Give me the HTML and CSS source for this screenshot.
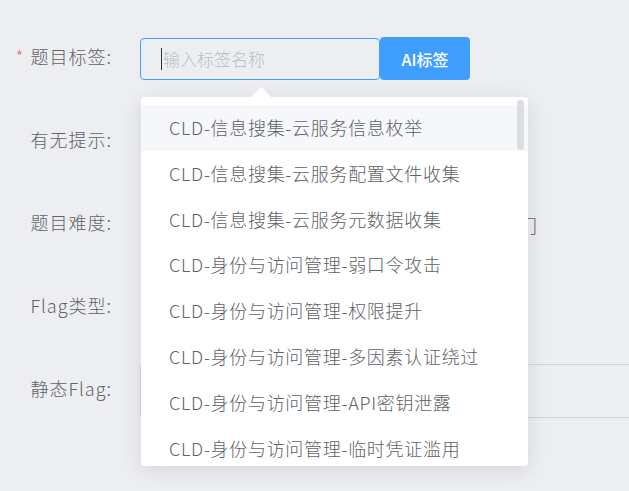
FILE: index.html
```html
<!DOCTYPE html>
<html lang="zh-CN">
<head>
<meta charset="utf-8">
<link rel="stylesheet" href="styles.css">
</head>
<body>
<div class="page">
  <span class="spark spark-a"></span>
  <span class="spark spark-b"></span>
  <form class="form">
    <div class="row">
      <label class="label"><span class="req">*</span>题目标签:</label>
      <div class="control tag-control">
        <div class="input is-focus"><span class="caret"></span><span class="ph">输入标签名称</span></div>
        <button type="button" class="btn">AI标签</button>
        <div class="dropdown">
          <span class="arrow"></span>
          <ul class="list">
            <li class="item is-hover">CLD-信息搜集-云服务信息枚举</li>
            <li class="item">CLD-信息搜集-云服务配置文件收集</li>
            <li class="item">CLD-信息搜集-云服务元数据收集</li>
            <li class="item">CLD-身份与访问管理-弱口令攻击</li>
            <li class="item">CLD-身份与访问管理-权限提升</li>
            <li class="item">CLD-身份与访问管理-多因素认证绕过</li>
            <li class="item">CLD-身份与访问管理-API密钥泄露</li>
            <li class="item">CLD-身份与访问管理-临时凭证滥用</li>
          </ul>
          <span class="thumb"></span>
        </div>
      </div>
    </div>
    <div class="row">
      <label class="label">有无提示:</label>
      <div class="control"></div>
    </div>
    <div class="row">
      <label class="label">题目难度:</label>
      <div class="control level">入门</div>
    </div>
    <div class="row">
      <label class="label">Flag类型:</label>
      <div class="control"></div>
    </div>
    <div class="row">
      <label class="label">静态Flag:</label>
      <div class="control"><div class="box"></div></div>
    </div>
  </form>
</div>
</body>
</html>
```

FILE: styles.css
```css
* { box-sizing: border-box; }
html, body {
  margin: 0;
  padding: 0;
}
body {
  width: 629px;
  height: 491px;
  overflow: hidden;
  background: #edeef2;
  font-family: "Noto Sans CJK SC", "Noto Sans", sans-serif;
  font-weight: 300;
  color: #606266;
}
.page {
  position: relative;
  width: 629px;
  height: 491px;
}
.spark {
  position: absolute;
  width: 8px;
  height: 8px;
  border-radius: 50%;
  background: radial-gradient(circle, rgba(220, 245, 250, 0.9) 0, rgba(220, 245, 250, 0) 70%);
}
.spark-a { left: 264px; top: 3px; }
.spark-b { left: 489px; top: 64px; }
.form {
  margin: 0;
  padding-top: 17px;
}
.row {
  display: flex;
  align-items: center;
  height: 83px;
}
.label {
  flex: 0 0 140px;
  padding-right: 28px;
  padding-bottom: 5px;
  text-align: right;
  font-size: 18px;
  letter-spacing: 1px;
  color: #606266;
  white-space: nowrap;
}
.req {
  color: #f56c6c;
  margin-right: 6px;
}
.control {
  flex: 1;
  display: flex;
  align-items: center;
}
.tag-control {
  position: relative;
}
.input {
  width: 240px;
  height: 42px;
  border: 1px solid #409eff;
  border-radius: 4px;
  display: flex;
  align-items: center;
  padding-left: 20px;
}
.caret {
  width: 1px;
  height: 22px;
  background: #303133;
  margin-right: 1px;
}
.ph {
  font-size: 17px;
  color: #b8bcc4;
}
.btn {
  width: 90px;
  height: 43px;
  border: 0;
  border-radius: 4px;
  background: #409eff;
  color: #fff;
  font-family: inherit;
  font-size: 16px;
  font-weight: 500;
  padding: 0;
}
.dropdown {
  position: absolute;
  left: 1px;
  top: 60px;
  width: 387px;
  height: 369px;
  background: #fff;
  border-radius: 4px;
  box-shadow: 0 4px 22px rgba(0, 0, 0, 0.1);
  padding-top: 8px;
  z-index: 2;
}
.arrow {
  position: absolute;
  left: 110px;
  top: -10px;
  width: 0;
  height: 0;
  border-left: 10px solid transparent;
  border-right: 10px solid transparent;
  border-bottom: 10px solid #fff;
}
.list {
  list-style: none;
  margin: 0;
  padding: 0;
  height: 361px;
  overflow: hidden;
  border-radius: 0 0 4px 4px;
}
.item {
  height: 45.8px;
  line-height: 45.8px;
  padding: 0 28px;
  font-size: 18px;
  letter-spacing: 0.7px;
  color: #606266;
  white-space: nowrap;
}
.item.is-hover {
  background: #f5f7fa;
}
.thumb {
  position: absolute;
  right: 4px;
  top: 3px;
  width: 7px;
  height: 50px;
  border-radius: 4px;
  background: #dcdde0;
}
.level {
  justify-content: flex-end;
  flex: 0 0 397px;
  font-size: 18px;
  color: #606266;
}
.box {
  width: 520px;
  height: 54px;
  border: 1px solid #d3d5da;
  border-radius: 4px;
}
```
